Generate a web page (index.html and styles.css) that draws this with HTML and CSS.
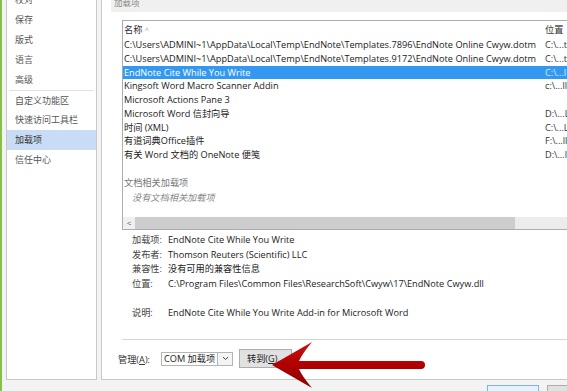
FILE: index.html
```html
<!DOCTYPE html>
<html lang="zh-CN">
<head>
<meta charset="utf-8">
<title>加载项</title>
<link rel="stylesheet" href="styles.css">
</head>
<body>
<div class="edge"></div>
<div class="window">
  <div class="frame">
    <nav class="nav">
      <ul>
        <li>校对</li>
        <li>保存</li>
        <li>版式</li>
        <li>语言</li>
        <li>高级</li>
        <li class="sep">自定义功能区</li>
        <li>快速访问工具栏</li>
        <li class="active">加载项</li>
        <li>信任中心</li>
      </ul>
    </nav>
    <main class="panel">
      <div class="title">加载项</div>
      <div class="listbox">
        <div class="row head"><span class="c1">名称 <span class="sort">^</span></span><span class="c2">位置</span></div>
        <div class="row"><span class="c1">C:\Users\ADMINI~1\AppData\Local\Temp\EndNote\Templates.7896\EndNote Online Cwyw.dotm</span><span class="c2">C:\...tr</span></div>
        <div class="row"><span class="c1">C:\Users\ADMINI~1\AppData\Local\Temp\EndNote\Templates.9172\EndNote Online Cwyw.dotm</span><span class="c2">C:\...tr</span></div>
        <div class="row selected"><span class="c1">EndNote Cite While You Write</span><span class="c2">C:\...ll</span></div>
        <div class="row"><span class="c1">Kingsoft Word Macro Scanner Addin</span><span class="c2">c:\...ll</span></div>
        <div class="row"><span class="c1">Microsoft Actions Pane 3</span><span class="c2"></span></div>
        <div class="row"><span class="c1">Microsoft Word 信封向导</span><span class="c2">D:\...L</span></div>
        <div class="row"><span class="c1">时间 (XML)</span><span class="c2">C:\...L</span></div>
        <div class="row"><span class="c1">有道词典Office插件</span><span class="c2">F:\...ll</span></div>
        <div class="row"><span class="c1">有关 Word 文档的 OneNote 便笺</span><span class="c2">D:\...ll</span></div>
        <div class="group">文档相关加载项</div>
        <div class="empty">没有文档相关加载项</div>
        <div class="hscroll">
          <span class="sarrow">&lt;</span>
          <span class="thumb"></span>
          <span class="track"></span>
        </div>
      </div>
      <div class="details">
        <span class="lbl">加载项:</span><span class="val">EndNote Cite While You Write</span>
        <span class="lbl">发布者:</span><span class="val">Thomson Reuters (Scientific) LLC</span>
        <span class="lbl">兼容性:</span><span class="val">没有可用的兼容性信息</span>
        <span class="lbl">位置:</span><span class="val">C:\Program Files\Common Files\ResearchSoft\Cwyw\17\EndNote Cwyw.dll</span>
        <span class="lbl"></span><span class="val"></span>
        <span class="lbl">说明:</span><span class="val">EndNote Cite While You Write Add-in for Microsoft Word</span>
      </div>
      <div class="divider"></div>
      <div class="manage">
        <span class="mlabel">管理(<u>A</u>):</span>
        <span class="select"><span class="stext">COM 加载项</span><span class="sbtn"><svg width="7" height="5" viewBox="0 0 7 5"><path d="M1 1 L3.5 3.5 L6 1" fill="none" stroke="#444" stroke-width="1"/></svg></span></span>
        <span class="btn">转到(<u>G</u>)...</span>
      </div>
    </main>
  </div>
  <div class="footer">
    <span class="fbtn default">确定</span>
    <span class="fbtn">取消</span>
  </div>
</div>
<svg class="arrow" width="567" height="391" viewBox="0 0 567 391">
  <defs>
    <linearGradient id="ag" x1="0" y1="0" x2="0" y2="1">
      <stop offset="0" stop-color="#c81414"/>
      <stop offset="0.5" stop-color="#b00000"/>
      <stop offset="1" stop-color="#8e0000"/>
    </linearGradient>
  </defs>
  <path d="M272 365 L312 342 Q302 354 299 361 L421 361 A4 4 0 0 1 421 369 L299 369 Q302 376 312 388 Z" fill="url(#ag)"/>
</svg>
</body>
</html>
```
FILE: styles.css
```css
html, body {
  margin: 0;
  padding: 0;
}
body {
  width: 567px;
  height: 391px;
  overflow: hidden;
  background: #f3f3f3;
  font-family: "Open Sans", "Noto Sans CJK SC", sans-serif;
  font-size: 9.2px;
  color: #222;
  display: flex;
  position: relative;
}
.edge {
  width: 2px;
  flex: none;
  background: #86c04a;
}
.window {
  flex: 1;
  display: flex;
  flex-direction: column;
  min-width: 0;
}
.frame {
  height: 380px;
  display: flex;
  flex: none;
}
.nav {
  margin-left: 4px;
  width: 91px;
  flex: none;
  box-sizing: border-box;
  border: 1px solid #c8c8c8;
  border-top: none;
  background: #fff;
  overflow: hidden;
}
.nav ul {
  list-style: none;
  margin: -10px 0 0;
  padding: 0;
}
.nav li {
  height: 20px;
  line-height: 20px;
  padding-left: 8px;
  font-size: 9px;
  color: #555;
}
.nav li.sep::before {
  content: "";
  display: block;
  height: 0;
  border-top: 1px solid #e2e2e2;
  margin: 0 2px 0 -6px;
}
.nav li.sep {
  line-height: 19px;
}
.nav li.active {
  background: #c9dcf5;
  color: #333;
}
.panel {
  margin-left: 4px;
  flex: 1;
  min-width: 0;
  box-sizing: border-box;
  border-left: 1px solid #c8c8c8;
  border-bottom: 1px solid #c8c8c8;
  background: #fff;
  padding-left: 9px;
  display: flex;
  flex-direction: column;
  overflow: hidden;
}
.title {
  height: 18px;
  margin-top: -6px;
  line-height: 18px;
  background: #f0f0f0;
  color: #888;
  font-size: 8.5px;
  padding-left: 3px;
  flex: none;
}
.listbox {
  margin-top: 8px;
  margin-left: 11px;
  width: 520px;
  height: 210px;
  flex: none;
  box-sizing: border-box;
  border: 1px solid #acacac;
  display: flex;
  flex-direction: column;
  background: #fff;
}
.row {
  display: flex;
  height: 13.75px;
  line-height: 13.75px;
  white-space: nowrap;
  color: #1a1a1a;
}
.row.head {
  height: 17px;
  line-height: 17px;
  color: #333;
}
.c1 {
  width: 421px;
  flex: none;
  padding-left: 1px;
  overflow: hidden;
}
.c2 {
  flex: 1;
  color: #333;
}
.sort {
  color: #999;
  font-size: 7px;
}
.row.selected {
  background: #3399f0;
  color: #fff;
}
.row.selected .c2 {
  color: #dbe9fb;
}
.group {
  margin-top: 12.75px;
  line-height: 15px;
  padding-left: 1px;
  color: #777;
}
.empty {
  line-height: 15px;
  padding-left: 9px;
  color: #888;
  font-style: italic;
}
.hscroll {
  margin-top: auto;
  height: 12px;
  display: flex;
  background: #eaeaea;
}
.sarrow {
  width: 12px;
  line-height: 12px;
  text-align: center;
  color: #555;
  font-size: 8px;
  background: #f0f0f0;
}
.thumb {
  width: 380px;
  background: #cdcdcd;
}
.track {
  flex: 1;
  background: #ececec;
}
.details {
  margin-top: 3px;
  margin-left: 21px;
  display: grid;
  grid-template-columns: 36px 1fr;
  grid-auto-rows: 14.5px;
  line-height: 14.5px;
  white-space: nowrap;
  flex: none;
}
.lbl {
  color: #444;
}
.val {
  color: #1a1a1a;
}
.divider {
  margin-top: 19px;
  margin-left: 11px;
  border-top: 1px solid #d6d6d6;
  flex: none;
}
.manage {
  margin-top: 9px;
  margin-left: 7px;
  display: flex;
  align-items: center;
  height: 19px;
  flex: none;
}
.mlabel {
  color: #333;
  width: 43px;
  white-space: nowrap;
}
.select {
  width: 72px;
  height: 14px;
  box-sizing: border-box;
  border: 1px solid #b5b5b5;
  display: flex;
  align-items: stretch;
  background: #fff;
}
.stext {
  flex: 1;
  line-height: 12px;
  padding-left: 2px;
  color: #222;
  white-space: nowrap;
  overflow: hidden;
}
.sbtn {
  width: 14px;
  flex: none;
  border-left: 1px solid #b5b5b5;
  display: flex;
  align-items: center;
  justify-content: center;
  background: #f4f4f4;
}
.btn {
  margin-left: 6px;
  width: 53px;
  height: 19px;
  box-sizing: border-box;
  border: 1px solid #adadad;
  background: #e1e1e1;
  line-height: 17px;
  padding-left: 7px;
  color: #222;
  white-space: nowrap;
  overflow: hidden;
}
.footer {
  flex: 1;
  display: flex;
  align-items: flex-start;
  padding-left: 485px;
  padding-top: 5px;
  gap: 8px;
  overflow: hidden;
}
.fbtn {
  width: 52px;
  height: 18px;
  flex: none;
  box-sizing: border-box;
  border: 1px solid #adadad;
  background: #e1e1e1;
  text-align: center;
  line-height: 16px;
  padding-top: 3px;
}
.fbtn.default {
  border-color: #7fb4e6;
  background: #e9f1fa;
}
.arrow {
  position: absolute;
  left: 0;
  top: 0;
  pointer-events: none;
}
```
